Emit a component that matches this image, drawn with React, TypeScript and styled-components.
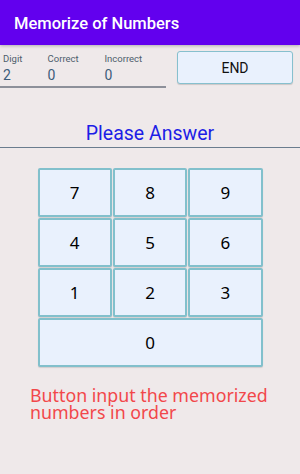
import styled, { createGlobalStyle } from 'styled-components';

const GlobalStyle = createGlobalStyle`
  html, body {
    margin: 0;
    padding: 0;
    background: #efe9ea;
  }
  body {
    font-family: Roboto, 'Noto Sans', sans-serif;
  }
`;

const Screen = styled.div`
  width: 300px;
  height: 474px;
  background: #efe9ea;
  display: flex;
  flex-direction: column;
  overflow: hidden;
`;

const TopBar = styled.div`
  height: 45px;
  background: #6200ee;
  display: flex;
  align-items: center;
  padding-left: 14px;
  box-shadow: 0 1px 3px rgba(0, 0, 0, 0.25);
`;

const Title = styled.h1`
  margin: 2px 0 0;
  color: #ffffff;
  font-family: Roboto, sans-serif;
  font-size: 16.5px;
  font-weight: 500;
`;

const StatusRow = styled.div`
  display: flex;
  align-items: flex-start;
  padding-top: 7px;
`;

const Stats = styled.div`
  width: 166px;
  height: 36px;
  display: flex;
  border-bottom: 2px solid #8d909a;
  box-sizing: border-box;
`;

const Stat = styled.div<{ $width: number }>`
  width: ${(p) => p.$width}px;
  padding-left: 3px;
  display: flex;
  flex-direction: column;
`;

const StatLabel = styled.span`
  font-size: 9.5px;
  color: #4e5d6c;
  line-height: 11px;
  margin-top: 1px;
`;

const StatValue = styled.span`
  font-size: 14px;
  color: #3d5c7a;
  line-height: 16px;
  margin-top: 3px;
`;

const EndButton = styled.button`
  margin-left: 11px;
  margin-top: -1px;
  width: 116px;
  height: 33px;
  background: #e9f1fd;
  border: 1px solid #86c0ce;
  border-radius: 3px;
  box-shadow: 0 1px 1px rgba(0, 0, 0, 0.15);
  font-family: Roboto, sans-serif;
  font-size: 14px;
  font-weight: 400;
  color: #111;
  padding: 0;
`;

const Prompt = styled.div`
  margin-top: 34px;
  text-align: center;
  color: #1d1de6;
  font-family: Roboto, sans-serif;
  font-size: 19.5px;
  line-height: 23px;
  padding-bottom: 2px;
  border-bottom: 1px solid #6a7c8e;
`;

const Keypad = styled.div`
  margin: 20px auto 0;
  width: 225px;
  display: grid;
  grid-template-columns: repeat(3, 1fr);
  grid-auto-rows: 49px;
  gap: 1px;
`;

const Key = styled.button<{ $wide?: boolean }>`
  grid-column: ${(p) => (p.$wide ? '1 / span 3' : 'auto')};
  background: #e9f1fd;
  border: 2px solid #82c0cc;
  border-radius: 2px;
  font-family: 'Noto Sans', Roboto, sans-serif;
  font-size: 17px;
  color: #000;
  padding: 0;
  box-shadow: 0 1px 1px rgba(0, 0, 0, 0.12);
`;

const Hint = styled.p`
  margin: 20px 0 0 30px;
  color: #f2474a;
  font-family: 'Noto Sans', sans-serif;
  font-size: 17.8px;
  line-height: 16.5px;
  width: 265px;
`;

const stats = [
  { label: 'Digit', value: '2', width: 44 },
  { label: 'Correct', value: '0', width: 57 },
  { label: 'Incorrect', value: '0', width: 65 },
];

const keys = ['7', '8', '9', '4', '5', '6', '1', '2', '3'];

export default function App() {
  return (
    <>
      <GlobalStyle />
      <Screen>
        <TopBar>
          <Title>Memorize of Numbers</Title>
        </TopBar>
        <StatusRow>
          <Stats>
            {stats.map((s) => (
              <Stat key={s.label} $width={s.width}>
                <StatLabel>{s.label}</StatLabel>
                <StatValue>{s.value}</StatValue>
              </Stat>
            ))}
          </Stats>
          <EndButton>END</EndButton>
        </StatusRow>
        <Prompt>Please Answer</Prompt>
        <Keypad>
          {keys.map((k) => (
            <Key key={k}>{k}</Key>
          ))}
          <Key $wide>0</Key>
        </Keypad>
        <Hint>Button input the memorized numbers in order</Hint>
      </Screen>
    </>
  );
}
